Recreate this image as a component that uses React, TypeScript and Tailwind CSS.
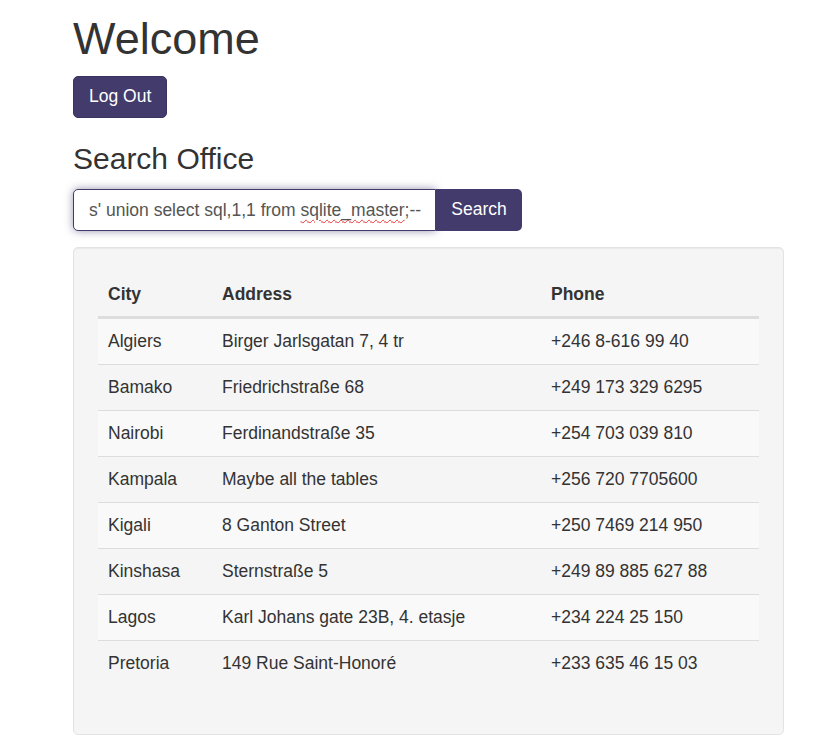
import React from "react";

const rows: [string, string, string][] = [
  ["Algiers", "Birger Jarlsgatan 7, 4 tr", "+246 8-616 99 40"],
  ["Bamako", "Friedrichstraße 68", "+249 173 329 6295"],
  ["Nairobi", "Ferdinandstraße 35", "+254 703 039 810"],
  ["Kampala", "Maybe all the tables", "+256 720 7705600"],
  ["Kigali", "8 Ganton Street", "+250 7469 214 950"],
  ["Kinshasa", "Sternstraße 5", "+249 89 885 627 88"],
  ["Lagos", "Karl Johans gate 23B, 4. etasje", "+234 224 25 150"],
  ["Pretoria", "149 Rue Saint-Honoré", "+233 635 46 15 03"],
];

export default function App() {
  return (
    <div className="min-h-[741px] bg-white pl-[73px] pt-[14px] text-[#333] text-[17.5px] leading-[25px] font-['Liberation_Sans',Arial,sans-serif]">
      <h1 className="text-[45px] leading-[1.1] font-normal m-0">Welcome</h1>
      <button className="mt-[12px] h-[42px] px-[15px] rounded-[5px] bg-[#433b6b] border border-[#3b335f] text-white text-[17.5px] leading-[25px]">
        Log Out
      </button>
      <h3 className="mt-[24px] text-[30px] leading-[1.1] font-normal">Search Office</h3>
      <div className="mt-[14px] flex h-[42px] w-[449px]">
        <div className="w-[363px] rounded-l-[5px] border border-[#433b6b] bg-white pl-[15px] text-[#555] leading-[40px] shadow-[0_0_8px_rgba(67,59,107,0.55)] whitespace-pre overflow-hidden">
          {"s' union select sql,1,1 from "}
          <span className="underline decoration-wavy decoration-[#e33] decoration-[1px] underline-offset-[3px]">sqlite_master</span>
          {";--"}
        </div>
        <button className="w-[86px] rounded-r-[5px] bg-[#433b6b] text-white text-[17.5px] leading-[25px]">
          Search
        </button>
      </div>
      <div className="mt-[16px] w-[711px] rounded-[5px] border border-[#e3e3e3] bg-[#f5f5f5] p-[24px] shadow-[inset_0_1px_1px_rgba(0,0,0,0.05)]">
        <table className="w-full table-fixed border-collapse mb-[24px]">
          <colgroup>
            <col className="w-[114px]" />
            <col className="w-[329px]" />
            <col />
          </colgroup>
          <thead>
            <tr className="border-b-[3px] border-[#ddd]">
              <th className="text-left font-bold px-[10px] pt-[10px] pb-[9px]">City</th>
              <th className="text-left font-bold px-[10px] pt-[10px] pb-[9px]">Address</th>
              <th className="text-left font-bold px-[10px] pt-[10px] pb-[9px]">Phone</th>
            </tr>
          </thead>
          <tbody>
            {rows.map((r, i) => (
              <tr
                key={r[0]}
                className={`${i % 2 === 0 ? "bg-[#f9f9f9]" : ""} ${i < rows.length - 1 ? "border-b border-[#ddd]" : ""}`}
              >
                <td className="px-[10px] py-[10px] whitespace-nowrap">{r[0]}</td>
                <td className="px-[10px] py-[10px] whitespace-nowrap">{r[1]}</td>
                <td className="px-[10px] py-[10px] whitespace-nowrap">{r[2]}</td>
              </tr>
            ))}
          </tbody>
        </table>
      </div>
    </div>
  );
}
